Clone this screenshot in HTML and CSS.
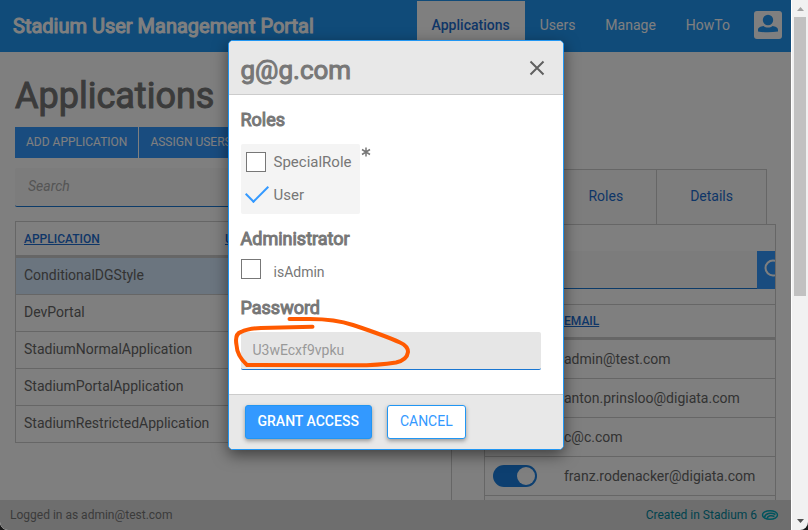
FILE: index.html
```html
<!DOCTYPE html>
<html lang="en">
<head>
<meta charset="utf-8">
<title>Stadium User Management Portal</title>
<link rel="stylesheet" href="styles.css">
</head>
<body>
<div class="window">
  <div class="page">
    <header class="topbar">
      <div class="brand">Stadium User Management Portal</div>
      <nav class="nav">
        <a class="nav-link active" href="#">Applications</a>
        <a class="nav-link" href="#">Users</a>
        <a class="nav-link" href="#">Manage</a>
        <a class="nav-link" href="#">HowTo</a>
        <button class="account" type="button" aria-label="Account">
          <svg viewBox="0 0 28 28" width="28" height="28" aria-hidden="true"><circle cx="14" cy="9" r="5.200"/><path d="M4 20.500V19C4 16.500 6.500 15.300 9.500 15C12 17 16 17 18.500 15C21.500 15.300 24 16.500 24 19V20.500Q14 22 4 20.500Z"/></svg>
        </button>
      </nav>
    </header>
    <main class="content">
      <section class="apps">
        <h1>Applications</h1>
        <div class="toolbar">
          <button type="button">ADD APPLICATION</button>
          <button type="button">ASSIGN USERS</button>
        </div>
        <input class="search" type="search" placeholder="Search" aria-label="Search applications">
        <table class="grid">
          <thead><tr><th><a href="#">APPLICATION</a></th><th><a href="#">URL</a></th></tr></thead>
          <tbody>
            <tr class="selected"><td>ConditionalDGStyle</td><td></td></tr>
            <tr><td>DevPortal</td><td></td></tr>
            <tr><td>StadiumNormalApplication</td><td></td></tr>
            <tr><td>StadiumPortalApplication</td><td></td></tr>
            <tr><td>StadiumRestrictedApplication</td><td></td></tr>
          </tbody>
        </table>
      </section>
      <section class="details">
        <div class="tabs">
          <button type="button">Users</button>
          <button type="button">Roles</button>
          <button type="button">Details</button>
        </div>
        <div class="panel">
          <div class="user-search">
            <input class="search" type="search" aria-label="Search users">
            <button type="button" aria-label="Search">
              <svg viewBox="0 0 38 38" width="38" height="38" aria-hidden="true"><circle cx="16" cy="17" r="7.500"/><path d="M22 23l6 6"/></svg>
            </button>
          </div>
          <table class="grid users">
            <thead><tr><th></th><th><a href="#">EMAIL</a></th></tr></thead>
            <tbody>
              <tr><td><input class="switch" type="checkbox" aria-label="admin@test.com access" checked></td><td>admin@test.com</td></tr>
              <tr><td><input class="switch" type="checkbox" aria-label="anton.prinsloo@digiata.com access" checked></td><td>anton.prinsloo@digiata.com</td></tr>
              <tr><td><input class="switch" type="checkbox" aria-label="c@c.com access" checked></td><td>c@c.com</td></tr>
              <tr><td><input class="switch" type="checkbox" aria-label="franz.rodenacker@digiata.com access" checked></td><td>franz.rodenacker@digiata.com</td></tr>
              <tr><td></td><td></td></tr>
            </tbody>
          </table>
        </div>
      </section>
    </main>
    <footer class="statusbar">
      <span>Logged in as admin@test.com</span>
      <a href="#">Created in Stadium 6
        <svg viewBox="0 0 18 12" width="18" height="12" aria-hidden="true"><ellipse cx="9" cy="6" rx="7.500" ry="4.300"/><path d="M3.500 8.500C4 4.500 10 3 14.500 5.500M6 9.500C7 6.500 10.500 6 13.500 7.500"/></svg>
      </a>
    </footer>

    <div class="overlay">
      <form class="modal" role="dialog" aria-labelledby="dialog-title">
        <div class="modal-head">
          <h2 id="dialog-title">g@g.com</h2>
          <button class="close" type="button" aria-label="Close">
            <svg viewBox="0 0 16 16" width="16" height="16" aria-hidden="true"><path d="M1.500 1.500L14.500 14.500M14.500 1.500L1.500 14.500"/></svg>
          </button>
        </div>
        <div class="modal-body">
          <h3>Roles</h3>
          <div class="roles">
            <div class="role-list">
              <label><input class="box" type="checkbox">SpecialRole</label>
              <label><input class="box" type="checkbox" checked>User</label>
            </div>
            <svg class="required" viewBox="0 0 10 10" width="10" height="10" aria-hidden="true"><path d="M5 0.500V9.500M1 2.500L9 7.500M9 2.500L1 7.500"/></svg>
          </div>
          <h3>Administrator</h3>
          <label class="admin"><input class="box" type="checkbox"><span>isAdmin</span></label>
          <h3><label for="password">Password</label></h3>
          <div class="password">
            <input id="password" type="text" value="U3wEcxf9vpku" readonly>
            <svg class="scribble" viewBox="233 316 180 56" width="180" height="56" aria-hidden="true"><path d="M289.500 319H310C330 319 341 321 353 325C371 331 388 337 400 342.500Q408 346 408 352Q407 360 396 362.500C381 365 366 365.500 350 365.300L247 365Q237 356 236.500 345Q234.500 334 241 332Q248 328.500 261 328L312.500 326.700"/></svg>
          </div>
        </div>
        <div class="modal-foot">
          <button class="primary" type="submit">GRANT ACCESS</button>
          <button class="secondary" type="button">CANCEL</button>
        </div>
      </form>
    </div>
  </div>
  <div class="scrollbar" aria-hidden="true">
    <svg class="up" viewBox="0 0 7 4" width="7" height="4"><path d="M0 4L3.500 0L7 4Z"/></svg>
    <div class="thumb"></div>
    <svg class="down" viewBox="0 0 7 4" width="7" height="4"><path d="M0 0L3.500 4L7 0Z"/></svg>
  </div>
</div>
</body>
</html>
```
FILE: styles.css
```css
* { box-sizing: border-box; }
html { background: #181818; }
body { margin: 0; font: 14px/20px Roboto, "Liberation Sans", sans-serif; color: #666; }
button, input { font: inherit; color: inherit; margin: 0; }
button { border: 0; padding: 0; }
h1, h2, h3 { margin: 0; }
svg { display: block; flex: none; }

.window { display: flex; height: 100vh; overflow: hidden; border-radius: 0 0 8px 8px; }
.page { position: relative; flex: 1; min-width: 0; display: flex; flex-direction: column; background: #fff; }

h1, h2, h3, .brand { font-weight: 400; -webkit-text-stroke: 1px currentColor; }

.topbar { display: flex; justify-content: space-between; height: 52px; background: #2196f3; color: #fff; }
.brand { padding-left: 13px; font-size: 20px; line-height: 53px; white-space: nowrap; }
.nav { display: flex; align-items: center; padding: 1px 9px 0 0; }
.nav-link { height: 100%; padding: 0 15px; line-height: 48px; font-weight: 400; color: #fff; text-decoration: none; }
.nav-link.active { background: #fff; color: #1c6dd0; font-weight: 500; }
.account { margin: 0 0 4px 9px; background: #fff; border-radius: 3px; }
.account svg { fill: #2196f3; }

.content { flex: 1; min-height: 0; overflow: hidden; display: grid; grid-template-columns: minmax(0, 416fr) minmax(0, 325fr); gap: 20px; padding: 20px 15px 0; }
h1 { font-size: 36px; line-height: 48px; color: #777; }
.toolbar { display: flex; gap: 1px; margin-top: 7px; }
.toolbar button { height: 31px; padding: 0 11px 1px; background: #39f; color: #fff; font-size: 12px; }
.search { display: block; width: 100%; height: 39px; margin-top: 10px; padding: 0 13px 2px; border: 0; border-bottom: 1px solid #1976d2; border-radius: 2px; background: #f8f8f8; }
.search::placeholder { font-style: italic; color: #aaa; }
.grid { width: 100%; margin-top: 14px; border: 1px solid #ccc; border-bottom: 0; border-spacing: 0; table-layout: fixed; color: #666; }
.grid th { height: 36px; padding: 0 8px; border-bottom: 3px solid #ccc; text-align: left; font-size: 12px; font-weight: 500; }
.grid a { color: #1c6dd0; }
.grid td { height: 37px; padding: 0 8px 2px; border-bottom: 1px solid #ccc; white-space: nowrap; }
.grid th:first-child { width: 201px; }
.selected td { background: #d6eaff; }

.details { padding-top: 97px; }
.tabs { display: flex; padding-right: 9px; justify-content: flex-end; }
.tabs button { height: 55px; padding: 0 33px 2px; border: solid #ccc; border-width: 1px 1px 0 0; background: #fafafa; color: #1c6dd0; }
.panel { border: 1px solid #ccc; padding: 26px 0 0 32px; overflow: hidden; height: 600px; }
.user-search { display: flex; width: calc(100% + 20px); }
.user-search .search { flex: 1; min-width: 0; height: 38px; margin: 0; border-radius: 0; }
.user-search button { width: 38px; background: #39f; }
.user-search svg { fill: none; stroke: #fff; stroke-width: 2; }
.users { margin-top: 15px; border-right: 0; }
.users th { height: 35px; }
.users th:first-child { width: 71px; }
.users td { height: 39px; padding-bottom: 0; }
.switch { appearance: none; display: flex; width: 44px; height: 22px; padding: 2px; border-radius: 11px; background: #ccc; }
.switch::before { content: ""; width: 18px; height: 18px; border-radius: 50%; background: #fff; }
.switch:checked { background: #1a7fe0; justify-content: flex-end; }

.statusbar { display: flex; justify-content: space-between; height: 30px; padding: 0 12px 0 10px; background: #ddd; font-size: 12px; line-height: 30px; color: #777; }
.statusbar a { display: flex; align-items: center; gap: 4px; color: #00869c; text-decoration: none; }
.statusbar svg { fill: none; stroke: #00a8bc; stroke-width: 1.500; }

.overlay { position: absolute; inset: 0; display: flex; align-items: flex-start; justify-content: center; padding-top: 40px; background: rgba(0, 0, 0, .5); }
.modal { width: 336px; border: 1px solid #2196f3; border-radius: 5px; background: #fff; color: #777; box-shadow: 0 5px 15px rgba(0, 0, 0, .5); }
.modal-head { display: flex; align-items: center; justify-content: space-between; height: 54px; padding: 4px 18px 0 12px; border-bottom: 1px solid #ccc; border-radius: 4px 4px 0 0; background: #e8e8e8; }
.modal-head h2 { font-size: 26px; line-height: 40px; }
.close { background: none; margin-bottom: 4px; }
.close svg { fill: none; stroke: #606060; stroke-width: 2; }
.modal-body { padding: 13px 22px 24px 12px; }
h3 { font-size: 18px; line-height: 24px; }
.roles { display: flex; gap: 1px; margin: 12px 0 13px; }
.role-list { display: flex; flex-direction: column; gap: 13px; padding: 8px 8px 9px 5px; border-radius: 2px; background: #f4f4f4; font-size: 15px; }
.role-list label { display: flex; align-items: center; gap: 8px; }
.required { margin-top: 3px; fill: none; stroke: #777; stroke-width: 1.500; }
.box { appearance: none; flex: none; width: 20px; height: 20px; border: 1px solid #777; background: #fff; }
.box:checked { border: 0; background: none; }
.box:checked::before { content: ""; display: block; width: 20px; height: 10px; border: solid #39f; border-width: 0 0 2px 2px; transform: rotate(-45deg); }
.admin { display: flex; gap: 13px; margin: 8px 0 14px; }
.admin span { padding-top: 3px; }
.password { position: relative; margin-top: 12px; }
.password input { display: block; width: 100%; height: 38px; padding: 0 12px 2px; border: 0; border-bottom: 1px solid #1976d2; border-radius: 2px; background: #e6e6e6; color: #999; }
.scribble { position: absolute; left: -8px; top: -16px; fill: none; stroke: #ff5a00; stroke-width: 4; stroke-linecap: round; stroke-linejoin: round; pointer-events: none; }
.modal-foot { display: flex; gap: 15px; padding: 10px 16px; border-top: 1px solid #ccc; border-radius: 0 0 4px 4px; background: #e8e8e8; }
.modal-foot button { height: 34px; padding: 0 12px 2px; border: 1px solid #2196f3; border-radius: 3px; box-shadow: 0 2px 4px rgba(0, 0, 0, .35); }
.primary { background: #39f; color: #fff; font-weight: 500; }
.secondary { background: #fff; color: #39f; }

.scrollbar { display: flex; flex-direction: column; align-items: center; width: 17px; padding: 7px 2px; background: #f1f1f1; border-left: 1px solid #fff; }
.scrollbar .up { fill: #a3a3a3; }
.thumb { width: 100%; height: 54%; margin-top: 6px; margin-bottom: auto; background: #c1c1c1; }
.scrollbar .down { fill: #505050; }
```
